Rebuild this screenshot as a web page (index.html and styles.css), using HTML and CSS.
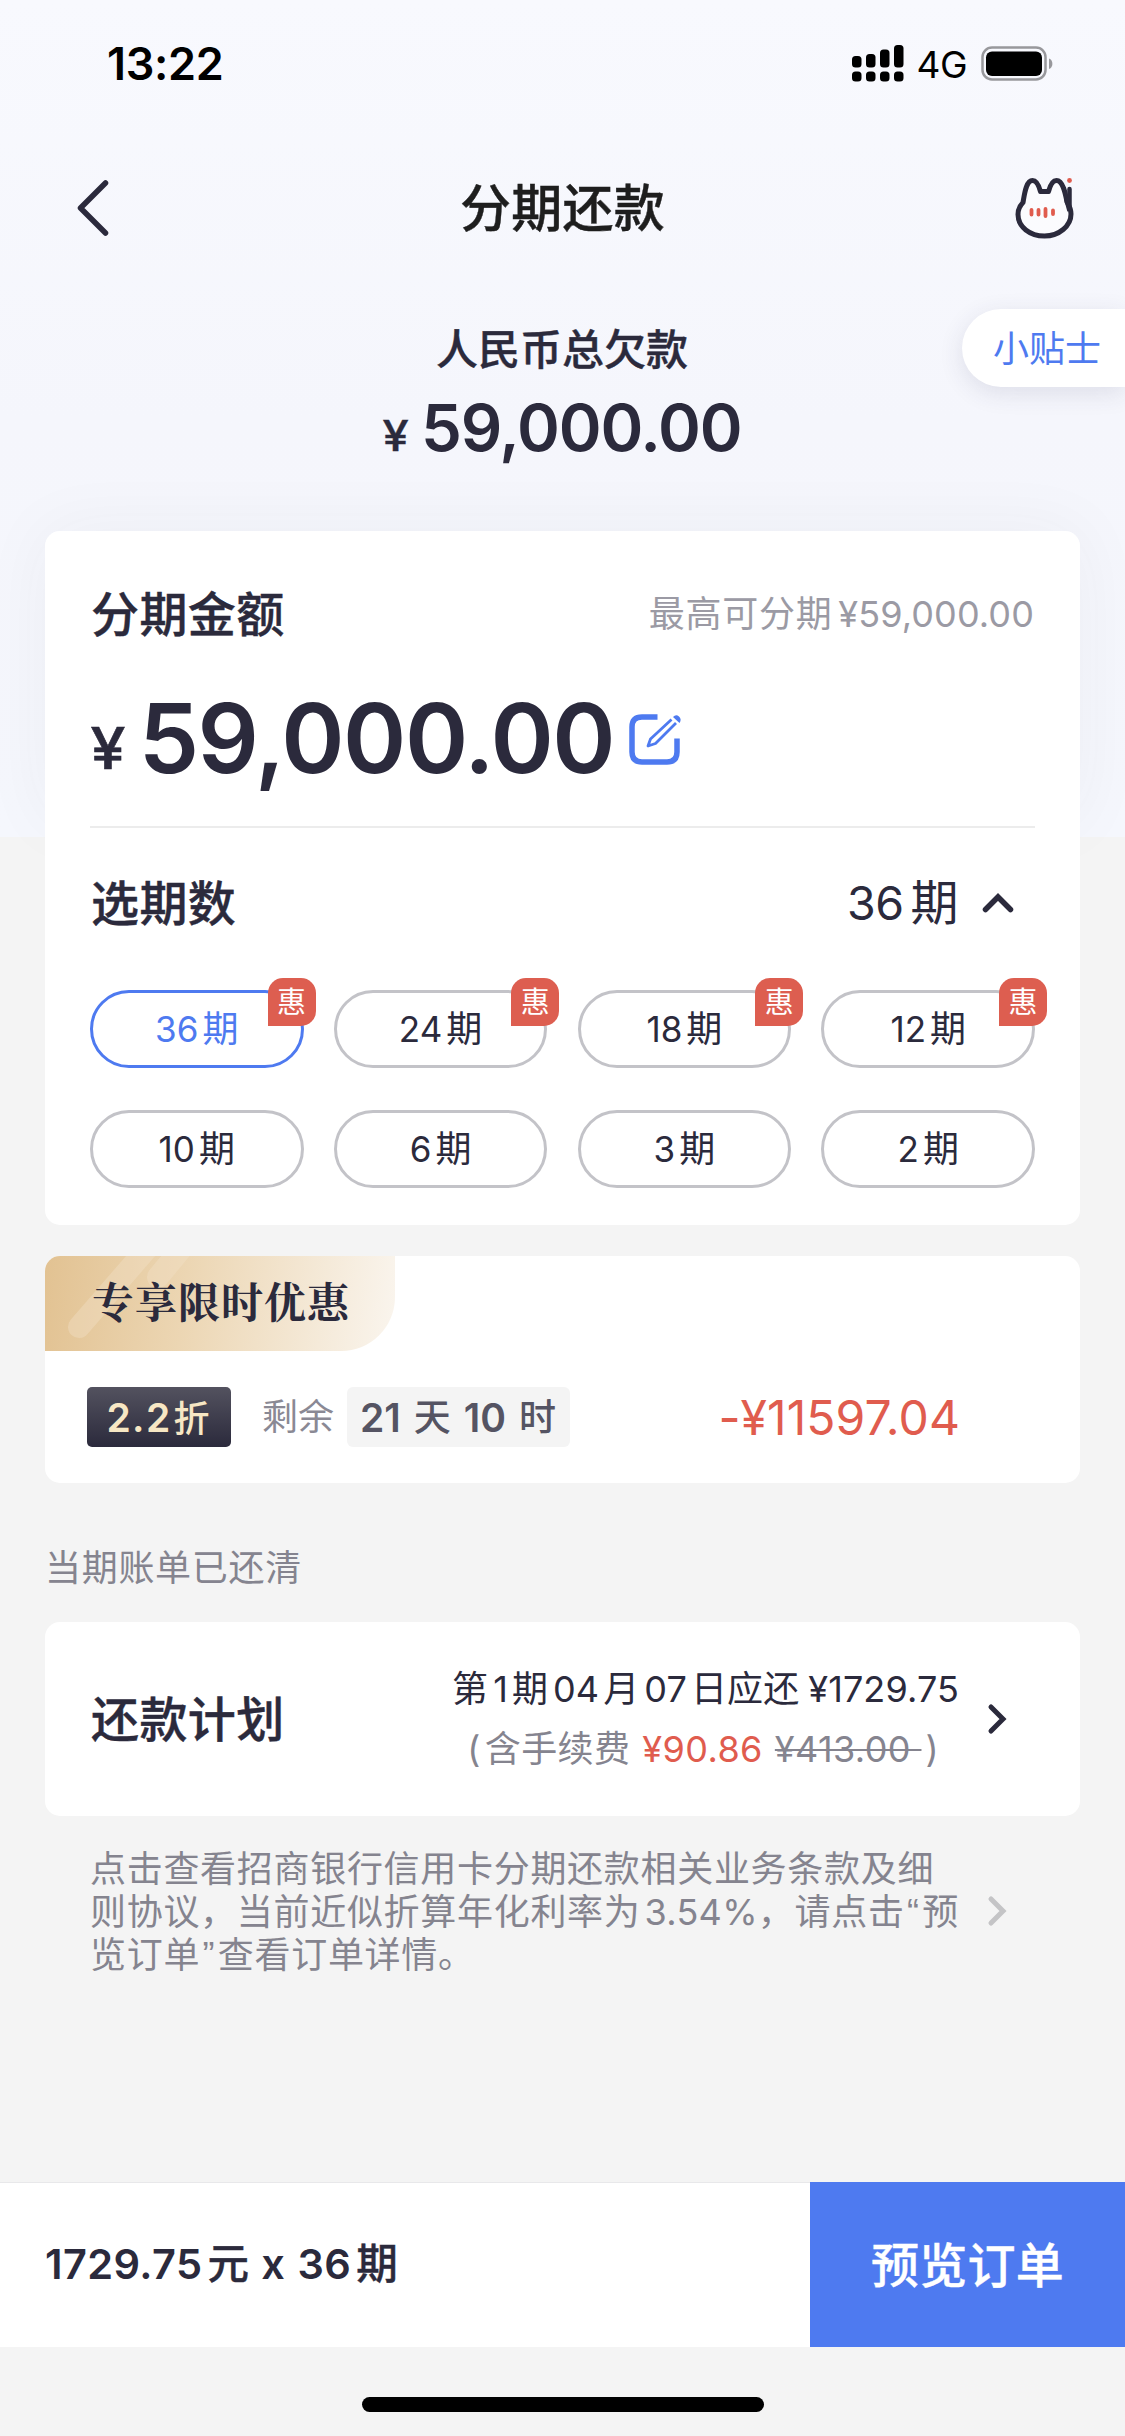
FILE: index.html
```html
<!DOCTYPE html>
<html lang="zh-CN">
<head>
<meta charset="utf-8">
<title>分期还款</title>
<link rel="stylesheet" href="styles.css">
</head>
<body>
<div class="page">
  <div class="hero">
    <div class="status">
      <span class="time">13:22</span>
      <div class="status-right">
        <svg class="signal" width="52" height="37" viewBox="0 0 52 37">
          <rect x="0" y="11" width="9.5" height="11.5" rx="3.5"/><rect x="14" y="9" width="9.5" height="13.5" rx="3.5"/><rect x="28" y="4.5" width="9.5" height="18" rx="3.5"/><rect x="42" y="0" width="9.5" height="22.5" rx="3.5"/>
          <rect x="0" y="26.5" width="9.5" height="10" rx="3.5"/><rect x="14" y="26.5" width="9.5" height="10" rx="3.5"/><rect x="28" y="26.5" width="9.5" height="10" rx="3.5"/><rect x="42" y="26.5" width="9.5" height="10" rx="3.5"/>
        </svg>
        <span class="net">4G</span>
        <svg class="battery" width="73" height="36" viewBox="0 0 73 36">
          <rect x="1.5" y="1.5" width="63" height="32" rx="9.5" fill="none" stroke="#98989c" stroke-width="2.5"/>
          <rect x="5" y="5.5" width="56" height="24.5" rx="6" fill="#000"/>
          <path d="M68 12.500c4.500 1.500 4.500 9 0 10.500z" fill="#98989c"/>
        </svg>
      </div>
    </div>
    <div class="nav">
      <svg class="back" width="34" height="58" viewBox="0 0 34 58"><path d="M29.500 4 4.500 29l25 25" fill="none" stroke="#2b2a3c" stroke-width="5.500" stroke-linecap="round" stroke-linejoin="round"/></svg>
      <h1 class="title">分期还款</h1>
      <svg class="cat" width="60" height="62" viewBox="0 0 60 62">
        <path d="M33.500 14.500h-8C24 9 22 3.500 17.500 3.500 11 3.500 9.500 17 8 25.500 4.500 29 3 33 3 37.500 3 50 15 59 29.500 59S56 49 56 37c0-4-1.500-8-4-12-1.500-8-4-21.500-10.500-21.500C37 3.500 35 9 33.500 14.500z" fill="#fff" fill-opacity=".5" stroke="#2b2a3c" stroke-width="5" stroke-linejoin="round"/>
        <path d="M54.500 12v22l-3-11" fill="none" stroke="#2b2a3c" stroke-width="4.500" stroke-linecap="round"/>
        <path d="M16.500 33v4.500M23.500 33v4.500M30.500 32v7M38 33.500v3.500" stroke="#e05c4e" stroke-width="3.800" stroke-linecap="round"/>
        <circle cx="54.500" cy="3.500" r="2.400" fill="#e05c4e"/>
      </svg>
    </div>
    <div class="tip">小贴士</div>
    <div class="debt-label">人民币总欠款</div>
    <div class="debt"><span class="yen">¥</span><span class="num">59,000.00</span></div>
  </div>

  <main class="content">
    <section class="card plan">
      <div class="row head">
        <h2 class="h">分期金额</h2>
        <span class="max">最高可分期<span class="max-num">¥59,000.00</span></span>
      </div>
      <div class="amount">
        <span class="yen">¥</span><span class="num">59,000.00</span>
        <svg class="edit" width="56" height="56" viewBox="0 0 56 56" fill="none" stroke="#4e7af0">
          <path d="M30.500 5H15Q5 5 5 15V40Q5 50 15 50H40Q50 50 50 40V26.500" stroke-width="5.500"/>
          <path d="M44.500 7.500 23.500 27 21 34l7.500-2.500L49 11" stroke-width="2.800" stroke-linejoin="round"/>
          <path d="M46 5Q49 1.800 52 4.500T52.500 11z" fill="#4e7af0" stroke="none"/>
        </svg>
      </div>
      <div class="divider"></div>
      <div class="row term">
        <h2 class="h">选期数</h2>
        <div class="chosen"><span>36</span><span class="zh">期</span>
          <svg width="34" height="22" viewBox="0 0 34 22"><path d="M4.500 17.500 17 5l12.500 12.500" fill="none" stroke="#2b2a3c" stroke-width="5.500" stroke-linecap="round" stroke-linejoin="miter"/></svg>
        </div>
      </div>
      <div class="terms">
        <div class="pill on"><span>36</span><span class="zh">期</span><i class="hui">惠</i></div>
        <div class="pill"><span>24</span><span class="zh">期</span><i class="hui">惠</i></div>
        <div class="pill"><span>18</span><span class="zh">期</span><i class="hui">惠</i></div>
        <div class="pill"><span>12</span><span class="zh">期</span><i class="hui">惠</i></div>
        <div class="pill"><span>10</span><span class="zh">期</span></div>
        <div class="pill"><span>6</span><span class="zh">期</span></div>
        <div class="pill"><span>3</span><span class="zh">期</span></div>
        <div class="pill"><span>2</span><span class="zh">期</span></div>
      </div>
    </section>

    <section class="card promo">
      <div class="ribbon">
        <svg class="stripes" width="350" height="95" viewBox="0 0 350 95"><path d="M34 71 106 -12M113 21 137 -8" stroke="#f2e2c8" stroke-opacity=".4" stroke-width="22" stroke-linecap="round"/></svg>
        <span class="ribbon-text">专享限时优惠</span>
      </div>
      <div class="promo-row">
        <span class="discount"><b>2.2</b>折</span>
        <span class="left">剩余</span>
        <span class="countdown"><b>21</b><span>天</span><b>10</b><span>时</span></span>
        <span class="save">-¥11597.04</span>
      </div>
    </section>

    <p class="cleared">当期账单已还清</p>

    <section class="card repay">
      <h2 class="h">还款计划</h2>
      <div class="repay-info">
        <div class="due">第<span class="n">1</span>期<span class="n">04</span>月<span class="n">07</span>日应还<span class="due-num">¥1729.75</span></div>
        <div class="fee"><span class="paren">(</span>含手续费<span class="fee-now">¥90.86</span><s class="fee-old">¥413.00&nbsp;</s><span class="paren end">)</span></div>
      </div>
      <svg class="chev" width="22" height="34" viewBox="0 0 22 34"><path d="M5 5 17 17 5 29" fill="none" stroke="#2b2a3c" stroke-width="5" stroke-linecap="round"/></svg>
    </section>

    <div class="terms-note">
      <p class="note">点击查看招商银行信用卡分期还款相关业务条款及细<br>则协议，当前近似折算年化利率为<span class="rate">3.54%</span>，请点击<span class="q">“</span>预<br>览订单<span class="q">”</span>查看订单详情。</p>
      <svg class="chev" width="22" height="34" viewBox="0 0 22 34"><path d="M5 5 17 17 5 29" fill="none" stroke="#c4c4c6" stroke-width="5" stroke-linecap="round"/></svg>
    </div>
  </main>

  <footer class="bar">
    <div class="sum"><span>1729.75</span><span class="zh">元</span><span class="x">x</span><span>36</span><span class="zh">期</span></div>
    <div class="cta">预览订单</div>
  </footer>
  <div class="home"><div class="home-line"></div></div>
</div>
</body>
</html>
```
FILE: styles.css
```css
* { box-sizing: border-box; margin: 0; padding: 0; }
body {
  width: 1125px;
  background: #f4f4f4;
  color: #2b2a3c;
  font-family: Inter, "Noto Sans CJK SC", sans-serif;
  font-size: 36px;
  text-autospace: no-autospace;
}
svg { display: block; flex: none; }
h1, h2 { font-weight: 500; }
.page { display: flex; flex-direction: column; width: 1125px; height: 2436px; overflow: hidden; }

.hero {
  position: relative;
  height: 837px;
  flex: none;
  background: linear-gradient(#f8f9fe, #f5f6fc 50%, #f5f7fd);
}
/* soft glow behind the upper part of the first card */
.hero::after {
  content: ""; position: absolute; left: 45px; right: 45px; top: 531px; height: 290px;
  border-radius: 15px; box-shadow: 0 0 70px rgba(50, 50, 60, .05);
}
.status { display: flex; justify-content: space-between; height: 128px; padding: 0 71px 0 107px; color: #000; }
.time { font-size: 45px; font-weight: 600; line-height: 127px; letter-spacing: -.3px; }
.status-right { display: flex; align-items: flex-start; }
.signal { margin-top: 45px; }
.net { font-size: 37px; line-height: 48px; margin: 41px 0 0 12px; letter-spacing: -.5px; }
.battery { margin: 46px 0 0 14px; }
.nav { display: flex; align-items: center; justify-content: space-between; height: 160px; padding: 0 50px 0 76px; }
.title { font-size: 51px; line-height: 60px; color: #1e1e1e; letter-spacing: .3px; padding-top: 2px; -webkit-text-stroke: .4px; }
.tip {
  position: absolute; right: 0; top: 309px; width: 163px; height: 78px;
  padding-left: 31px; line-height: 81px; border-radius: 39px 0 0 39px;
  background: #fff; color: #4e7af0; box-shadow: 0 6px 24px rgba(50, 50, 90, .12);
}
.debt-label { margin: 32px 1px 0 0; text-align: center; font-size: 42px; line-height: 60px; font-weight: 500; -webkit-text-stroke: .4px; }
.debt { display: flex; justify-content: center; align-items: baseline; line-height: 80px; margin-top: 8px; font-weight: 600; }
.debt .yen { font-size: 42px; margin-right: 14px; font-weight: 500; transform: scaleX(1.12); -webkit-text-stroke: .4px; }
.debt .num { font-size: 65px; letter-spacing: -1.2px; }

.content { position: relative; margin-top: -306px; padding: 0 45px; flex: 1; }
.card { background: #fff; border-radius: 15px; }
.plan { height: 694px; padding: 48px 45px 0; }
.row { display: flex; justify-content: space-between; align-items: center; height: 70px; }
.h { font-size: 48px; line-height: 73px; letter-spacing: .4px; padding: 1px 0 0 1px; -webkit-text-stroke: .4px; }
.max { color: #9b9aa4; letter-spacing: .7px; position: relative; top: -3px; margin-right: 1px; }
.max-num { margin-left: 6px; letter-spacing: .1px; }
.amount { display: flex; align-items: baseline; height: 130px; margin-top: 24px; line-height: 130px; font-weight: 600; }
.amount .yen { font-size: 57px; line-height: 1; margin: 0 15px 0 2px; position: relative; top: -4px; font-weight: 500; transform: scaleX(1.1); -webkit-text-stroke: .6px; }
.amount .num { font-size: 96px; letter-spacing: -1.5px; }
.edit { align-self: flex-start; margin: 39px 0 0 13px; }
.divider { height: 2px; background: #ececec; margin-top: 23px; }
.term { margin-top: 40px; }
.chosen { display: flex; align-items: baseline; font-size: 46.5px; line-height: 70px; letter-spacing: -.5px; padding-right: 20px; }
.chosen .zh { margin-left: 7px; font-size: 48px; line-height: 1; }
.chosen svg { margin-left: 23px; align-self: center; }
.terms { display: grid; grid-template-columns: repeat(4, 213.5px); justify-content: space-between; row-gap: 42px; margin-top: 52px; }
.pill {
  position: relative; display: flex; align-items: baseline; justify-content: center;
  height: 78px; border: 3px solid #c3c3c8; border-radius: 39px; font-size: 35px; line-height: 73px;
}
.pill .zh { margin-left: 4px; font-size: 36px; line-height: 1; }
.pill.on { border-color: #4e7af0; color: #4e7af0; }
.hui {
  position: absolute; right: -15px; top: -15px; width: 48px; height: 48px;
  background: #dd5e50; color: #fff; border-radius: 15px 15px 15px 0;
  font-style: normal; font-size: 29px; line-height: 49px; text-align: center;
}

.promo { height: 227px; margin-top: 31px; overflow: hidden; }
.ribbon {
  position: relative; width: 350px; height: 95px; padding-left: 47px; overflow: hidden;
  border-radius: 0 0 54px 0; background: linear-gradient(97deg, #e2c292, #ecd6b3 40%, #faf5ee);
}
.stripes { position: absolute; left: 0; top: 0; }
.ribbon-text { position: relative; font-family: "Noto Serif CJK SC", "Noto Sans CJK SC", serif; font-weight: 700; font-size: 42px; line-height: 88px; letter-spacing: 1px; }
.promo-row { display: flex; align-items: center; height: 60px; margin-top: 36px; padding: 0 120px 0 42px; }
.discount {
  width: 144px; height: 60px; line-height: 61px; text-align: center; border-radius: 5px; padding-right: 2px;
  background: linear-gradient(#53525f, #2b2a3c); color: #f7e7c4; font-size: 36px; font-weight: 500; white-space: nowrap;
}
.discount b { font-weight: 600; font-size: 39px; letter-spacing: 1.4px; margin-right: 2px; }
.left { margin-left: 31px; color: #8a8994; width: 73px; line-height: 60px; height: 60px; }
.countdown {
  display: flex; justify-content: space-between; width: 223px; height: 60px; margin-left: 12px; padding: 0 14px 0 13px;
  line-height: 61px; background: #f4f4f4; border-radius: 6px; color: #555463; font-weight: 500; font-size: 37px;
}
.countdown b { font-weight: 600; font-size: 39px; }
.save { margin-left: auto; color: #e05c4e; font-size: 48px; letter-spacing: .1px; }

.cleared { height: 139px; line-height: 50px; padding-top: 60px; color: #85848f; letter-spacing: .7px; }

.repay { display: flex; align-items: center; height: 194px; padding: 0 72px 0 45px; }
.repay-info { margin-left: auto; text-align: right; line-height: 60px; white-space: nowrap; }
.due { letter-spacing: .1px; }
.n { margin: 0 4px 0 5px; }
.due-num { margin-left: 9px; }
.fee { color: #85848f; padding-right: 20px; letter-spacing: .4px; }
.fee-now { color: #e05c4e; margin: 0 12px; }
.fee-old { text-decoration-thickness: 2px; }
.paren { margin-right: 4px; }
.paren.end { margin: 0 0 0 4px; }
.chev { margin-left: 27px; }

.terms-note { display: flex; align-items: center; padding: 32px 72px 0 45px; }
.note { width: 868px; line-height: 43px; color: #85848f; letter-spacing: .7px; white-space: nowrap; }
.note .rate { margin: 0 0 0 4px; letter-spacing: .3px; }
.note .q { font-family: "Liberation Sans", sans-serif; margin: 0 2.5px; }
.terms-note .chev { margin-left: auto; margin-top: -3px; }

.bar { display: flex; height: 165px; flex: none; background: #fff; border-top: 1px solid #e8e8ea; }
.sum { flex: 1; display: flex; align-items: baseline; line-height: 162px; padding-left: 45px; font-size: 41.5px; font-weight: 600; letter-spacing: .4px; }
.sum .zh { margin-left: 5px; font-weight: 500; line-height: 1; -webkit-text-stroke: .4px; }
.sum .x { margin: 0 12px; }
.cta { width: 315px; margin-top: -1px; background: #4e7af0; color: #fff; text-align: center; font-size: 48px; font-weight: 500; line-height: 167px; letter-spacing: .3px; -webkit-text-stroke: .4px; }
.home { height: 89px; flex: none; padding-top: 50px; }
.home-line { width: 402px; height: 15px; margin: 0 auto; background: #000; border-radius: 8px; }
```
